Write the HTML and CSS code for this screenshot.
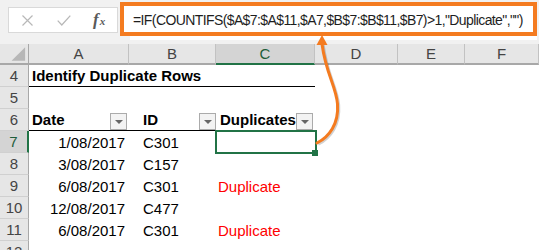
FILE: index.html
```html
<!DOCTYPE html>
<html>
<head>
<meta charset="utf-8">
<link rel="stylesheet" href="styles.css">
</head>
<body>
<div class="topbar">
  <div class="fnbox">
    <span class="slot"><svg width="11" height="11" viewBox="0 0 11 11"><path d="M0.5 0.5L10.5 10.5M10.5 0.5L0.5 10.5" stroke="#b8b8b8" stroke-width="1.2"/></svg></span>
    <span class="slot"><svg width="14" height="11" viewBox="0 0 14 11"><path d="M0.7 5.6L4.8 10L13.3 0.6" stroke="#b8b8b8" stroke-width="1.3" fill="none"/></svg></span>
    <span class="slot fx"><span class="fxf">f</span><span class="fxx">x</span></span>
  </div>
  <div class="fcol">
    <div class="formula">=IF(COUNTIFS($A$7:$A$11,$A7,$B$7:$B$11,$B7)&gt;1,"Duplicate","")</div>
    <div class="fstrip"></div>
  </div>
</div>

<div class="sheet">
  <div class="hd corner"><svg width="29" height="21" viewBox="0 0 29 21"><polygon points="26,4 26,18 12,18" fill="#b7b7b7"/></svg></div>
  <div class="hd">A</div>
  <div class="hd">B</div>
  <div class="hd selcol">C</div>
  <div class="hd">D</div>
  <div class="hd">E</div>
  <div class="hd">F</div>

  <div class="rh">4</div>
  <div class="c b ul pa">Identify Duplicate Rows</div>
  <div class="c ul"></div>
  <div class="c ul"></div>
  <div class="c"></div><div class="c"></div><div class="c"></div>

  <div class="rh">5</div>
  <div class="c"></div><div class="c"></div><div class="c"></div><div class="c"></div><div class="c"></div><div class="c"></div>

  <div class="rh">6</div>
  <div class="c b ul pa">Date<span class="fb"></span></div>
  <div class="c b ul pb">ID<span class="fb fb1"></span></div>
  <div class="c b ul pc">Duplicates<span class="fb"></span></div>
  <div class="c"></div><div class="c"></div><div class="c"></div>

  <div class="rh selrow">7</div>
  <div class="c r">1/08/2017</div>
  <div class="c pb">C301</div>
  <div class="c sel"></div>
  <div class="c"></div><div class="c"></div><div class="c"></div>

  <div class="rh">8</div>
  <div class="c r">3/08/2017</div>
  <div class="c pb">C157</div>
  <div class="c"></div>
  <div class="c"></div><div class="c"></div><div class="c"></div>

  <div class="rh">9</div>
  <div class="c r">6/08/2017</div>
  <div class="c pb">C301</div>
  <div class="c red">Duplicate</div>
  <div class="c"></div><div class="c"></div><div class="c"></div>

  <div class="rh">10</div>
  <div class="c r">12/08/2017</div>
  <div class="c pb">C477</div>
  <div class="c"></div>
  <div class="c"></div><div class="c"></div><div class="c"></div>

  <div class="rh">11</div>
  <div class="c r">6/08/2017</div>
  <div class="c pb">C301</div>
  <div class="c red">Duplicate</div>
  <div class="c"></div><div class="c"></div><div class="c"></div>

  <div class="rh">12</div>
  <div class="c"></div><div class="c"></div><div class="c"></div><div class="c"></div><div class="c"></div><div class="c"></div>
</div>

<svg class="arrow" width="539" height="250" viewBox="0 0 539 250">
  <path d="M317 143 C 329 137, 339 124, 337.5 104 C 336 86, 326 74, 322 44" stroke="rgba(0,0,0,0.18)" stroke-width="3" fill="none" transform="translate(1.2,1.2)"/>
  <path d="M317 143 C 329 137, 339 124, 337.5 104 C 336 86, 326 74, 322 44" stroke="#f47b20" stroke-width="3" fill="none" stroke-linecap="round"/>
  <polygon points="322,35 316.5,45 327.5,45" fill="#f47b20"/>
</svg>
</body>
</html>
```

FILE: styles.css
```css
* { box-sizing: border-box; }
html, body { margin: 0; padding: 0; }
body {
  width: 539px;
  height: 250px;
  overflow: hidden;
  background: #ffffff;
  font-family: "Liberation Sans", Arial, sans-serif;
  position: relative;
}

.topbar {
  height: 44px;
  background: #f1f1f1;
  display: flex;
  align-items: flex-start;
}
.fnbox {
  margin: 7px 0 0 8px;
  width: 110px;
  height: 26px;
  background: #ffffff;
  border: 1px solid #d9d9d9;
  display: flex;
  align-items: center;
  padding-left: 1px;
}
.slot {
  width: 36px;
  display: flex;
  justify-content: center;
  align-items: center;
}
.fx {
  font-family: "Liberation Serif", serif;
  font-style: italic;
  color: #5a5a5a;
  align-items: baseline;
}
.fxf { font-size: 17px; font-weight: bold; }
.fxx { font-size: 11px; font-weight: bold; margin-left: 1px; }

.fcol {
  margin: 2px 0 0 2px;
  width: 417px;
}
.formula {
  height: 34px;
  border: 4px solid #f47b20;
  background: #ffffff;
  font-size: 14px;
  letter-spacing: -0.6px;
  line-height: 26px;
  padding: 1px 0 0 9px;
  white-space: nowrap;
  color: #1e1e1e;
  overflow: hidden;
}
.fstrip {
  height: 4px;
  background: #ffffff;
  margin-left: 10px;
}

.sheet {
  display: grid;
  grid-template-columns: 29px 100px 87px 99px 83px 67px 74px;
  grid-template-rows: 21px repeat(9, 22px);
}
.hd {
  background: #e6e6e6;
  border-right: 1px solid #c2c2c2;
  border-bottom: 2px solid #a8a8a8;
  color: #444444;
  font-size: 15px;
  display: flex;
  align-items: center;
  justify-content: center;
}
.corner { border-right-color: #a8a8a8; }
.selcol {
  background: #d4d4d4;
  border-bottom-color: #217346;
  color: #1e5d3a;
}
.rh {
  background: #e6e6e6;
  border-right: 1px solid #a8a8a8;
  border-bottom: 1px solid #d0d0d0;
  color: #444444;
  font-size: 15px;
  display: flex;
  align-items: center;
  justify-content: center;
}
.selrow {
  background: #d4d4d4;
  border-right: 2px solid #217346;
  color: #1e5d3a;
}

.c {
  font-size: 15px;
  color: #000000;
  display: flex;
  align-items: center;
  padding: 0 4px;
  white-space: nowrap;
  min-width: 0;
}
.b { font-weight: bold; }
.r { justify-content: flex-end; }
.ul { border-bottom: 1px solid #000000; }
.pa { padding-left: 3px; padding-right: 0; }
.pb { padding-left: 14px; padding-right: 0; }
.pc { padding-left: 4px; padding-right: 0; }
.red { color: #ff0000; padding-left: 2px; }

.fb {
  width: 17px;
  height: 17px;
  margin-left: auto;
  margin-right: 2px;
  align-self: flex-end;
  margin-bottom: 0;
  border: 1px solid #ababab;
  background: #f3f3f3;
  display: flex;
  align-items: center;
  justify-content: center;
}
.fb1 { margin-right: 0; }
.fb::after {
  content: "";
  width: 0;
  height: 0;
  border-left: 4px solid transparent;
  border-right: 4px solid transparent;
  border-top: 4px solid #666666;
  margin-top: 1px;
}

.sel { position: relative; }
.sel::after {
  content: "";
  position: absolute;
  left: -1px;
  top: -1px;
  right: -2px;
  bottom: -1px;
  border: 2px solid #217346;
}
.sel::before {
  content: "";
  position: absolute;
  right: -3px;
  bottom: -3px;
  width: 6px;
  height: 6px;
  background: #217346;
  z-index: 2;
}

.arrow {
  position: absolute;
  left: 0;
  top: 0;
  pointer-events: none;
}
```
